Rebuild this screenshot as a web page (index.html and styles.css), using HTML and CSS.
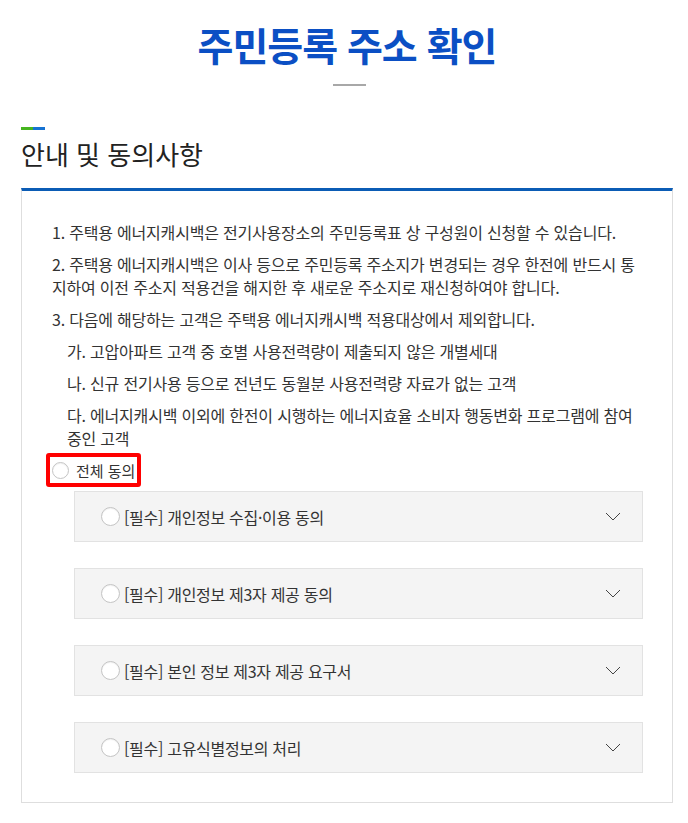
FILE: index.html
```html
<!DOCTYPE html>
<html lang="ko">
<head>
  <meta charset="UTF-8" />
  <meta name="viewport" content="width=device-width, initial-scale=1.0"/>
  <title>주민등록 주소 확인</title>
  <link rel="stylesheet" href="styles.css">
</head>
<body>
  <div class="page">
    <h1 class="page-title">주민등록 주소 확인</h1>
    <span class="title-bar"></span>

    <div class="section-head">
      <span class="mark"></span>
      <h2>안내 및 동의사항</h2>
    </div>

    <div class="agree-box">
      <ul class="notice">
        <li>1. 주택용 에너지캐시백은 전기사용장소의 주민등록표 상 구성원이 신청할 수 있습니다.</li>
        <li>2. 주택용 에너지캐시백은 이사 등으로 주민등록 주소지가 변경되는 경우 한전에 반드시 통지하여 이전 주소지 적용건을 해지한 후 새로운 주소지로 재신청하여야 합니다.</li>
        <li>3. 다음에 해당하는 고객은 주택용 에너지캐시백 적용대상에서 제외합니다.</li>
        <li class="sub">가. 고압아파트 고객 중 호별 사용전력량이 제출되지 않은 개별세대</li>
        <li class="sub">나. 신규 전기사용 등으로 전년도 동월분 사용전력량 자료가 없는 고객</li>
        <li class="sub">다. 에너지캐시백 이외에 한전이 시행하는 에너지효율 소비자 행동변화 프로그램에 참여중인 고객</li>
      </ul>

      <label class="all-agree"><span class="radio"></span>전체 동의</label>

      <div class="terms">
        <div class="term">
          <span class="radio"></span>
          <span class="term-name">[필수] 개인정보 수집·이용 동의</span>
          <svg class="chevron" width="16" height="9" viewBox="0 0 16 9"><polyline points="1,1 8,8 15,1" fill="none" stroke="#444" stroke-width="1"/></svg>
        </div>
        <div class="term">
          <span class="radio"></span>
          <span class="term-name">[필수] 개인정보 제3자 제공 동의</span>
          <svg class="chevron" width="16" height="9" viewBox="0 0 16 9"><polyline points="1,1 8,8 15,1" fill="none" stroke="#444" stroke-width="1"/></svg>
        </div>
        <div class="term">
          <span class="radio"></span>
          <span class="term-name">[필수] 본인 정보 제3자 제공 요구서</span>
          <svg class="chevron" width="16" height="9" viewBox="0 0 16 9"><polyline points="1,1 8,8 15,1" fill="none" stroke="#444" stroke-width="1"/></svg>
        </div>
        <div class="term">
          <span class="radio"></span>
          <span class="term-name">[필수] 고유식별정보의 처리</span>
          <svg class="chevron" width="16" height="9" viewBox="0 0 16 9"><polyline points="1,1 8,8 15,1" fill="none" stroke="#444" stroke-width="1"/></svg>
        </div>
      </div>
    </div>
  </div>
</body>
</html>
```

FILE: styles.css
```css
* {
  box-sizing: border-box;
  margin: 0;
  padding: 0;
}

body {
  background-color: #fff;
  color: #333;
  font-family: "Noto Sans CJK KR", "Noto Sans", sans-serif;
}

.page {
  padding: 20px 15px 0 21px;
  display: flex;
  flex-direction: column;
}

.page-title {
  text-align: center;
  color: #0b4fc4;
  font-size: 39px;
  font-weight: 700;
  line-height: 49px;
  letter-spacing: -1px;
}

.title-bar {
  align-self: center;
  width: 33px;
  height: 2px;
  margin: 15px 0 0 4px;
  background-color: #a8a8a8;
}

.section-head {
  margin-top: 41px;
}

.mark {
  display: block;
  width: 24px;
  height: 3px;
  background: linear-gradient(to right, #46b51f 50%, #1672d2 50%);
}

.section-head h2 {
  margin-top: 7px;
  font-size: 26px;
  font-weight: 400;
  line-height: 34px;
  color: #222;
}

.agree-box {
  margin-top: 17px;
  border: 1px solid #dedede;
  border-top: 3px solid #0b5cb5;
  padding: 30px 29px 29px 30px;
}

.notice {
  list-style: none;
  display: flex;
  flex-direction: column;
  gap: 9px;
  font-size: 16px;
  line-height: 23px;
  letter-spacing: -0.2px;
  color: #333;
}

.notice .sub {
  padding-left: 15px;
}

.all-agree {
  display: inline-flex;
  align-items: center;
  gap: 7px;
  margin: 3px 0 0 -6px;
  padding: 0 2px;
  height: 34px;
  border: 4px solid #f00;
  border-radius: 3px;
  font-size: 15px;
  color: #333;
}

.radio {
  flex: none;
  width: 17px;
  height: 17px;
  border: 1px solid #c4c4c4;
  border-radius: 50%;
  background-color: #fff;
  box-shadow: inset 0 1px 1px rgba(0,0,0,0.06);
}

.terms {
  display: flex;
  flex-direction: column;
  gap: 26px;
  margin: 4px 0 0 22px;
}

.term {
  display: flex;
  align-items: center;
  height: 51px;
  padding: 0 21px 0 26px;
  background-color: #f4f4f4;
  border: 1px solid #e2e2e2;
  font-size: 16px;
  letter-spacing: -0.3px;
  color: #333;
}

.term .radio {
  width: 19px;
  height: 19px;
  margin-right: 4px;
}

.term-name {
  flex: 1;
}

.chevron {
  flex: none;
}
```
